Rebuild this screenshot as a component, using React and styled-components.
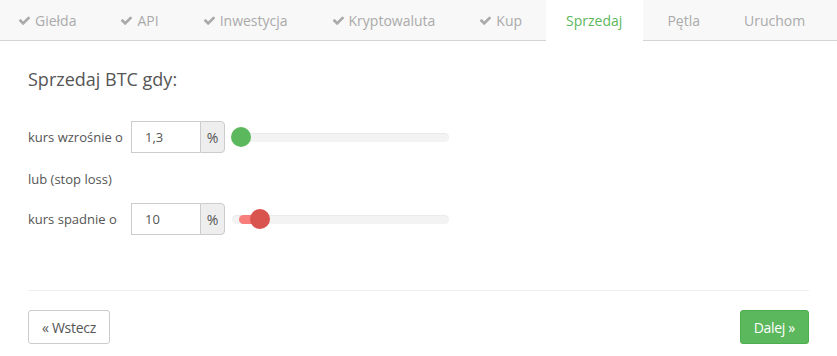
import React from "react";
import styled, { createGlobalStyle } from "styled-components";

const Global = createGlobalStyle`
  html, body { margin: 0; padding: 0; background: #fff; }
  body { font-family: "Open Sans", "Liberation Sans", sans-serif; color: #555; }
  * { box-sizing: border-box; }
`;

const Page = styled.div`
  width: 837px;
  height: 356px;
  display: flex;
  flex-direction: column;
`;

const Tabs = styled.nav`
  display: flex;
  height: 41px;
  background: #f8f8f8;
  border-bottom: 1px solid #d4d4d4;
  padding-left: 0;
`;

const Tab = styled.div`
  display: flex;
  align-items: center;
  gap: 4px;
  padding: ${(p) => (p.$active ? "0 21px 0 20px" : "0 20px")};
  margin: 0 2px;
  font-size: 14px;
  color: ${(p) => (p.$active ? "#5cb85c" : "#aaa")};
  background: ${(p) => (p.$active ? "#fff" : "transparent")};
  margin-bottom: -1px;
  &:first-child { margin-left: 0; padding-left: 18px; }
`;

const Check = styled.svg`
  width: 13px;
  height: 13px;
  fill: #aaa;
`;

const Content = styled.main`
  padding: 0 28px;
  display: flex;
  flex-direction: column;
`;

const Heading = styled.h3`
  margin: 25px 0 0;
  font-size: 18px;
  font-weight: 400;
  line-height: 26px;
  color: #555;
`;

const Row = styled.div`
  display: flex;
  align-items: center;
  height: 32px;
  margin-top: ${(p) => p.$mt}px;
`;

const Label = styled.label`
  font-size: 13px;
  width: 103px;
  color: #555;
`;

const Note = styled.div`
  font-size: 13px;
  margin-top: 17px;
  line-height: 18px;
  color: #555;
`;

const InputGroup = styled.div`
  display: flex;
  height: 32px;
  width: 94px;
`;

const Input = styled.input`
  width: 69px;
  height: 32px;
  border: 1px solid #ccc;
  border-right: none;
  border-radius: 0;
  padding: 0 13px;
  font-family: inherit;
  font-size: 13px;
  color: #555;
  outline: none;
`;

const Addon = styled.span`
  width: 25px;
  display: flex;
  align-items: center;
  justify-content: center;
  background: #eee;
  border: 1px solid #ccc;
  border-radius: 0 4px 4px 0;
  font-size: 14px;
  color: #555;
`;

const Track = styled.div`
  position: relative;
  margin-left: 7px;
  width: 217px;
  height: 9px;
  border-radius: 5px;
  background: #f3f3f3;
  box-shadow: inset 0 1px 1px rgba(0,0,0,0.04);
`;

const Fill = styled.div`
  position: absolute;
  left: 7px;
  top: 0;
  height: 9px;
  border-radius: 5px 0 0 5px;
  background: #f77e7b;
`;

const Thumb = styled.div`
  position: absolute;
  top: 50%;
  width: 20px;
  height: 20px;
  margin-left: -10px;
  margin-top: -10px;
  border-radius: 50%;
  background: ${(p) => p.$color};
`;

const Divider = styled.hr`
  margin: 55px 0 0;
  border: none;
  border-top: 1px solid #eee;
`;

const Footer = styled.div`
  display: flex;
  justify-content: space-between;
  margin-top: 19px;
`;

const Button = styled.button`
  height: 34px;
  padding: 0 13px;
  font-family: inherit;
  font-size: 14px;
  border-radius: 3px;
  border: 1px solid ${(p) => (p.$primary ? "#4cae4c" : "#ccc")};
  background: ${(p) => (p.$primary ? "#5cb85c" : "#fff")};
  color: ${(p) => (p.$primary ? "#fff" : "#555")};
  letter-spacing: -0.3px;
`;

const CheckIcon = () => (
  <Check viewBox="0 0 1792 1792">
    <path d="M1671 566q0 40-28 68l-724 724-136 136q-28 28-68 28t-68-28l-136-136-362-362q-28-28-28-68t28-68l136-136q28-28 68-28t68 28l294 295 656-657q28-28 68-28t68 28l136 136q28 28 28 68z" />
  </Check>
);

const tabs = [
  { t: "Giełda", done: true },
  { t: "API", done: true },
  { t: "Inwestycja", done: true },
  { t: "Kryptowaluta", done: true },
  { t: "Kup", done: true },
  { t: "Sprzedaj", active: true },
  { t: "Pętla" },
  { t: "Uruchom" },
];

export default function App() {
  return (
    <>
      <Global />
      <Page>
        <Tabs>
          {tabs.map((tab) => (
            <Tab key={tab.t} $active={tab.active}>
              {tab.done && <CheckIcon />}
              {tab.t}
            </Tab>
          ))}
        </Tabs>
        <Content>
          <Heading>Sprzedaj BTC gdy:</Heading>
          <Row $mt={29}>
            <Label>kurs wzrośnie o</Label>
            <InputGroup>
              <Input defaultValue="1,3" />
              <Addon>%</Addon>
            </InputGroup>
            <Track>
              <Thumb $color="#5cb85c" style={{ left: "9px" }} />
            </Track>
          </Row>
          <Note>lub (stop loss)</Note>
          <Row $mt={15}>
            <Label>kurs spadnie o</Label>
            <InputGroup>
              <Input defaultValue="10" />
              <Addon>%</Addon>
            </InputGroup>
            <Track>
              <Fill style={{ width: "21px" }} />
              <Thumb $color="#d9534f" style={{ left: "28px" }} />
            </Track>
          </Row>
          <Divider />
          <Footer>
            <Button>« Wstecz</Button>
            <Button $primary>Dalej »</Button>
          </Footer>
        </Content>
      </Page>
    </>
  );
}
